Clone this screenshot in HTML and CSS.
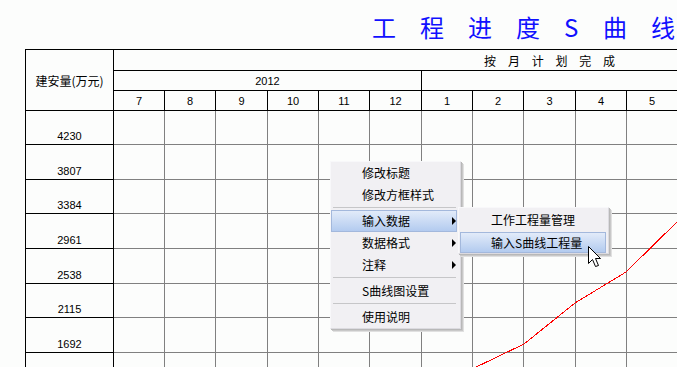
FILE: index.html
```html
<!DOCTYPE html>
<html lang="zh-CN">
<head>
<meta charset="utf-8">
<title>工程进度S曲线</title>
<link rel="stylesheet" href="styles.css">
</head>
<body>
<div class="page">
  <div class="title"><span>工</span><span>程</span><span>进</span><span>度</span><span class="s">S</span><span>曲</span><span>线</span></div>
  <div class="sheet">
    <div class="head">
      <div class="hl">建安量(万元)</div>
      <div class="plan">按月计划完成</div>
      <div class="yr">2012</div>
      <div class="yr2"></div>
      <div class="m">7</div><div class="m">8</div><div class="m">9</div><div class="m">10</div><div class="m">11</div><div class="m">12</div>
      <div class="m">1</div><div class="m">2</div><div class="m">3</div><div class="m">4</div><div class="m">5</div><div class="m"></div>
      <div class="m"></div><div class="m"></div><div class="m"></div><div class="m"></div><div class="m"></div>
    </div>
    <div class="grid">
      <div class="v">4230</div><i></i><i></i><i></i><i></i><i></i><i></i><i></i><i></i><i></i><i></i><i></i><i></i>
      <div class="v">3807</div><i></i><i></i><i></i><i></i><i></i><i></i><i></i><i></i><i></i><i></i><i></i><i></i>
      <div class="v">3384</div><i></i><i></i><i></i><i></i><i></i><i></i><i></i><i></i><i></i><i></i><i></i><i></i>
      <div class="v">2961</div><i></i><i></i><i></i><i></i><i></i><i></i><i></i><i></i><i></i><i></i><i></i><i></i>
      <div class="v">2538</div><i></i><i></i><i></i><i></i><i></i><i></i><i></i><i></i><i></i><i></i><i></i><i></i>
      <div class="v">2115</div><i></i><i></i><i></i><i></i><i></i><i></i><i></i><i></i><i></i><i></i><i></i><i></i>
      <div class="v">1692</div><i></i><i></i><i></i><i></i><i></i><i></i><i></i><i></i><i></i><i></i><i></i><i></i>
      <div class="v"></div><i></i><i></i><i></i><i></i><i></i><i></i><i></i><i></i><i></i><i></i><i></i><i></i>
    </div>
  </div>

  <svg class="curve" width="677" height="367" viewBox="0 0 677 367">
    <polyline points="470,370 524,344 575,303 626,272 680,219" fill="none" stroke="#ff0000" stroke-width="1" shape-rendering="crispEdges"/>
  </svg>

  <div class="menu">
    <div class="it">修改标题</div>
    <div class="it">修改方框样式</div>
    <div class="sep"></div>
    <div class="it on">输入数据<b class="arr"></b></div>
    <div class="it">数据格式<b class="arr"></b></div>
    <div class="it">注释<b class="arr"></b></div>
    <div class="sep"></div>
    <div class="it">S曲线图设置</div>
    <div class="sep"></div>
    <div class="it">使用说明</div>
  </div>

  <div class="submenu">
    <div class="sit">工作工程量管理</div>
    <div class="sit on">输入S曲线工程量</div>
  </div>

  <svg class="cursor" width="14" height="22" viewBox="0 0 14 22">
    <path d="M0.5 0.5 L0.5 17.5 L4.5 13.5 L7.5 20.5 L10.5 19.5 L7.5 12.5 L12.5 12.5 Z" fill="#ffffff" stroke="#000000" stroke-width="1" stroke-linejoin="miter"/>
  </svg>
</div>
</body>
</html>
```

FILE: styles.css
```css
* {
  box-sizing: border-box;
  margin: 0;
  padding: 0;
}

html, body {
  width: 677px;
  height: 367px;
  overflow: hidden;
  background: #fcfdfc;
}

body {
  font-family: "Noto Sans CJK SC", "Liberation Sans", sans-serif;
  color: #000;
}

.page {
  position: relative;
  width: 677px;
  height: 367px;
  overflow: hidden;
}

/* title */
.title {
  display: flex;
  height: 49px;
  padding: 15px 0 0 372px;
  color: #1010ff;
  font-size: 24px;
  line-height: 24px;
}

.title span {
  flex: none;
  width: 48px;
}

.title .s {
  width: 39px;
}

/* sheet */
.sheet {
  margin-left: 25px;
  width: 1000px;
  border-left: 1px solid #000;
  border-top: 1px solid #000;
}

.head {
  display: grid;
  grid-template-columns: 88px repeat(5, 51px 51px 52px) 51px 51px;
  grid-template-rows: 21px 20px 20px;
}

.head > div {
  border-right: 1px solid #000;
  border-bottom: 1px solid #000;
  display: flex;
  align-items: center;
  justify-content: center;
}

.hl {
  grid-row: 1 / 4;
  font-size: 12px;
  line-height: 14px;
  padding-top: 1px;
  word-spacing: 2px;
}

.plan {
  grid-column: 2 / -1;
  font-size: 12px;
  letter-spacing: 11.8px;
  padding-left: 12px;
  padding-top: 1px;
}

.yr {
  grid-column: 2 / 8;
}

.yr2 {
  grid-column: 8 / -1;
}

.yr, .m {
  font-family: "Liberation Sans", sans-serif;
  font-size: 11px;
}

.grid {
  display: grid;
  grid-template-columns: 88px repeat(4, 51px 51px 52px);
  grid-template-rows: 34px 35px 34px 35px 35px 34px 35px 35px;
}

.grid i {
  border-right: 1px solid #808080;
  border-bottom: 1px solid #808080;
}

.v {
  border-right: 1px solid #000;
  border-bottom: 1px solid #000;
  display: flex;
  align-items: flex-end;
  justify-content: center;
  padding-bottom: 1px;
  font-family: "Liberation Sans", sans-serif;
  font-size: 11px;
  line-height: 13px;
}

/* curve */
.curve {
  position: absolute;
  left: 0;
  top: 0;
  pointer-events: none;
}

/* context menu */
.menu {
  position: absolute;
  left: 330px;
  top: 161px;
  width: 131px;
  background: #f1f0f3;
  border: 1px solid #dcdbe0;
  border-left-color: #f8f8fa;
  border-top-color: #f8f8fa;
  box-shadow: 1px 1px 0 #b8b8b8, 2px 2px 0 #c8c8c8, 3px 3px 0 #e0e0e0;
  font-size: 12px;
}

.it {
  position: relative;
  height: 22px;
  line-height: 22px;
  padding-left: 31px;
  margin-right: 3px;
}

.it.on {
  background: linear-gradient(#e2ebf9, #b3cbef);
  border: 1px solid #a3b8dc;
  line-height: 20px;
  padding-left: 30px;
}

.arr {
  position: absolute;
  right: 1px;
  top: 7px;
  width: 0;
  height: 0;
  border-left: 4px solid #000;
  border-top: 4px solid transparent;
  border-bottom: 4px solid transparent;
}

.it.on .arr {
  right: 0;
  top: 6px;
}

.sep {
  height: 1px;
  background: #c6c6c8;
  margin: 1px 4px 2px 2px;
}

/* submenu */
.submenu {
  position: absolute;
  left: 458px;
  top: 207px;
  width: 151px;
  background: #f1f0f3;
  border: 1px solid #dcdbe0;
  border-left-color: #f8f8fa;
  border-top-color: #f8f8fa;
  box-shadow: 1px 1px 0 #b8b8b8, 2px 2px 0 #c8c8c8, 3px 3px 0 #e0e0e0;
  font-size: 12px;
}

.sit {
  height: 23px;
  line-height: 24px;
  padding-left: 32px;
}

.sit.on {
  height: 21px;
  line-height: 19px;
  margin: 1px 2px 0 1px;
  padding-left: 30px;
  background: linear-gradient(#e2ebf9, #b3cbef);
  border: 1px solid #a3b8dc;
}

.cursor {
  position: absolute;
  left: 588px;
  top: 246px;
}
```
